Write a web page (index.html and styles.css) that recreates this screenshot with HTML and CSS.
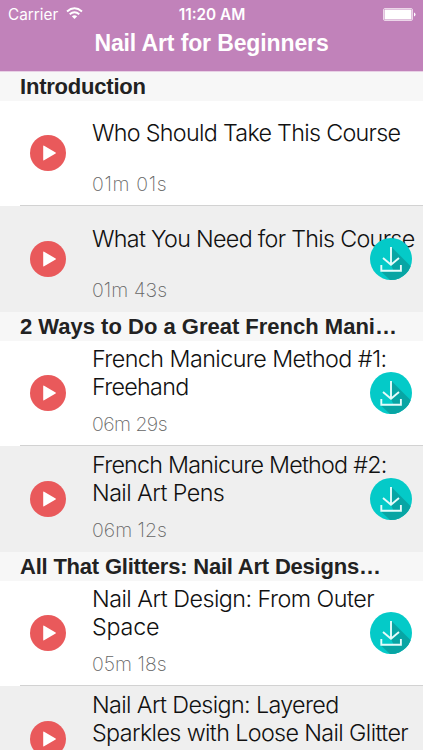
FILE: index.html
```html
<!DOCTYPE html>
<html lang="en">
<head>
<meta charset="utf-8">
<title>Nail Art for Beginners</title>
<link rel="stylesheet" href="styles.css">
</head>
<body>
<svg class="defs" aria-hidden="true">
  <symbol id="play" viewBox="0 0 36 36">
    <circle cx="18" cy="18" r="18" fill="#e9595b"/>
    <path d="M13.2 11.2v13.6q0 1 .9.5l11.500-6.700q.8-.6 0-1.100l-11.500-6.800q-.9-.5-.9.5z" fill="#fff"/>
  </symbol>
  <symbol id="download" viewBox="0 0 42 42">
    <path d="M0 0h42v42H0z" fill="#04cac8"/>
    <path d="M22 9.500L42 29.500V42H20L11 33.500H24L21 27z" fill="#08a5a4"/>
    <path d="M21 9v17.500M13 20l8 6.800 8-6.800M11.300 27v5.800h19.600V27" fill="none" stroke="#e6fbfa" stroke-width="1.900"/>
  </symbol>
</svg>
<header class="navbar">
  <div class="status">
    <div class="carrier"><span>Carrier</span>
      <svg class="wifi" viewBox="0 0 17 12"><g fill="none" stroke="#fff" stroke-width="2"><path d="M1 4.400q7.500-6.200 15 0"/><path d="M3.700 7.200q4.800-3.900 9.600 0"/></g><path d="M5.800 9.200q2.700-2 5.400 0L8.500 12z" fill="#fff"/></svg>
    </div>
    <span class="clock">11:20 AM</span>
    <svg class="battery" viewBox="0 0 33 13"><rect x=".5" y=".5" width="29" height="12" rx="1.500" fill="none" stroke="#ecd6e9"/><rect x="1.500" y="1.500" width="27" height="10" rx=".5" fill="#fff"/><path d="M31 4.500q1.500.3 1.500 2t-1.500 2z" fill="#fff"/></svg>
  </div>
  <h1>Nail Art for Beginners</h1>
</header>
<main>
  <section>
    <h2 class="tight">Introduction</h2>
    <article class="row">
      <svg class="play"><use href="#play"/></svg>
      <div class="text"><h3><span class="t4">Who Should Take This Course</span></h3><time class="wide">01m 01s</time></div>
    </article>
    <article class="row">
      <svg class="play"><use href="#play"/></svg>
      <div class="text"><h3><span class="t4">What You Need for This Course</span></h3><time>01m 43s</time></div>
      <svg class="download"><use href="#download"/></svg>
    </article>
  </section>
  <section>
    <h2>2 Ways to Do a Great French Mani…</h2>
    <article class="row">
      <svg class="play"><use href="#play"/></svg>
      <div class="text"><h3><span class="t2">French Manicure Method #1:</span><span class="t4">Freehand</span></h3><time class="narrow">06m 29s</time></div>
      <svg class="download"><use href="#download"/></svg>
    </article>
    <article class="row">
      <svg class="play"><use href="#play"/></svg>
      <div class="text"><h3><span class="t5">French Manicure Method #2:</span><span class="t2">Nail Art Pens</span></h3><time>06m 12s</time></div>
      <svg class="download"><use href="#download"/></svg>
    </article>
  </section>
  <section>
    <h2 class="tight">All That Glitters: Nail Art Designs…</h2>
    <article class="row">
      <svg class="play"><use href="#play"/></svg>
      <div class="text"><h3><span class="t1">Nail Art Design: From Outer</span><span class="t0">Space</span></h3><time>05m 18s</time></div>
      <svg class="download"><use href="#download"/></svg>
    </article>
    <article class="row">
      <svg class="play"><use href="#play"/></svg>
      <div class="text"><h3><span class="t3">Nail Art Design: Layered</span><span class="t3">Sparkles with Loose Nail Glitter</span></h3></div>
    </article>
  </section>
</main>
</body>
</html>
```
FILE: styles.css
```css
* { box-sizing: border-box; }
html, body { height: 100%; }
body { margin: 0; overflow: hidden; background: #fff; font-family: "Liberation Sans", sans-serif; }
main { height: calc(100vh - 72px); overflow: hidden; }
.defs { display: none; }
h1, h2, h3 { margin: 0; }
.navbar { height: 72px; background: #c182ba; color: #fff; border-bottom: 1px solid #e8d0e5; }
.status { display: grid; grid-template-columns: 1fr auto 1fr; align-items: center; height: 28px; padding: 0 7px 0 8px; font-family: Inter, sans-serif; font-size: 15.3px; }
.carrier { display: flex; align-items: center; gap: 8px; }
.wifi { width: 17px; height: 12px; margin-top: -2px; }
.clock { font-weight: 600; }
.battery { width: 33px; height: 13px; justify-self: end; }
h1 { font-size: 23px; line-height: 30px; letter-spacing: -.12px; text-align: center; white-space: nowrap; }
h2 { height: 28.5px; padding-left: 20px; background: #f7f7f7; color: #222; font-size: 22px; line-height: 30px; white-space: nowrap; }
h2.tight { letter-spacing: -.21px; }
.row { display: flex; align-items: center; height: 105.75px; padding-left: 30px; background: linear-gradient(#d2d2d2, #d2d2d2) 20px 100% / 100% 1px no-repeat #fff; }
.row:last-child { background: #efefef; }
.play { width: 36px; height: 36px; flex: none; }
.text { width: 324px; height: 100%; margin-left: 26px; padding-top: 4.5px; flex: none; }
h3 { display: flex; flex-direction: column; justify-content: center; align-items: flex-start; height: 56px; font-family: Inter, sans-serif; font-weight: 300; font-size: 23.3px; line-height: 27.75px; color: #111; white-space: nowrap; }
.t0 { letter-spacing: -.2px; }
.t1 { letter-spacing: -.52px; }
.t2 { letter-spacing: -.56px; }
.t3 { letter-spacing: -.62px; }
.t4 { letter-spacing: -.7px; }
.t5 { letter-spacing: -.76px; }
time { display: block; margin-top: 10px; font-family: Inter, sans-serif; font-weight: 200; font-size: 19.5px; line-height: 27px; color: #666; white-space: nowrap; }
time.wide { letter-spacing: .65px; }
time.narrow { letter-spacing: -.55px; }
.download { width: 42px; height: 42px; flex: none; margin-left: -46px; border-radius: 50%; overflow: hidden; z-index: 1; }
```
